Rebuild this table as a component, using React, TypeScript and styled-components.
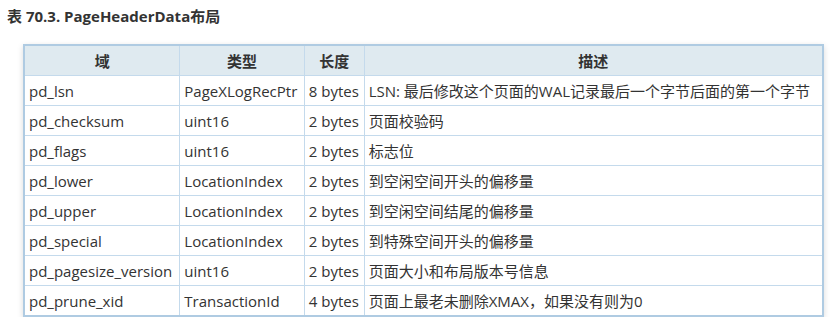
import React from 'react';
import styled, { createGlobalStyle } from 'styled-components';

const GlobalStyle = createGlobalStyle`
  body {
    margin: 0;
    background: #ffffff;
    font-family: "Open Sans", "Noto Sans CJK SC", sans-serif;
    color: #333333;
  }
`;

const Page = styled.div`
  padding: 6px 7px 0 7px;
`;

const Caption = styled.div`
  font-size: 15px;
  font-weight: 700;
  color: #333333;
  line-height: 20px;
`;

const Table = styled.table`
  margin: 18px 0 0 16px;
  width: 801px;
  border-collapse: collapse;
  border: 2px solid #afcbe2;
  box-shadow: 0 2px 6px rgba(0, 0, 0, 0.15);
  font-size: 15px;
`;

const Head = styled.th<{ $width: number }>`
  width: ${(p) => p.$width}px;
  height: 29px;
  padding: 0 4px;
  background: #dfeaf0;
  border: 1px solid #c4daec;
  font-weight: 700;
  text-align: center;
  color: #333333;
`;

const Cell = styled.td`
  height: 29px;
  padding: 0 4px;
  border: 1px solid #c4daec;
  white-space: nowrap;
  color: #333333;
`;

const columns = [
  { title: '域', width: 147 },
  { title: '类型', width: 116 },
  { title: '长度', width: 51 },
  { title: '描述', width: 451 },
];

const rows = [
  ['pd_lsn', 'PageXLogRecPtr', '8 bytes', 'LSN: 最后修改这个页面的WAL记录最后一个字节后面的第一个字节'],
  ['pd_checksum', 'uint16', '2 bytes', '页面校验码'],
  ['pd_flags', 'uint16', '2 bytes', '标志位'],
  ['pd_lower', 'LocationIndex', '2 bytes', '到空闲空间开头的偏移量'],
  ['pd_upper', 'LocationIndex', '2 bytes', '到空闲空间结尾的偏移量'],
  ['pd_special', 'LocationIndex', '2 bytes', '到特殊空间开头的偏移量'],
  ['pd_pagesize_version', 'uint16', '2 bytes', '页面大小和布局版本号信息'],
  ['pd_prune_xid', 'TransactionId', '4 bytes', '页面上最老未删除XMAX，如果没有则为0'],
];

const App: React.FC = () => {
  return (
    <Page>
      <GlobalStyle />
      <Caption>表 70.3. PageHeaderData布局</Caption>
      <Table>
        <thead>
          <tr>
            {columns.map((c) => (
              <Head key={c.title} $width={c.width}>
                {c.title}
              </Head>
            ))}
          </tr>
        </thead>
        <tbody>
          {rows.map((r) => (
            <tr key={r[0]}>
              {r.map((v, i) => (
                <Cell key={i}>{v}</Cell>
              ))}
            </tr>
          ))}
        </tbody>
      </Table>
    </Page>
  );
};

export default App;
